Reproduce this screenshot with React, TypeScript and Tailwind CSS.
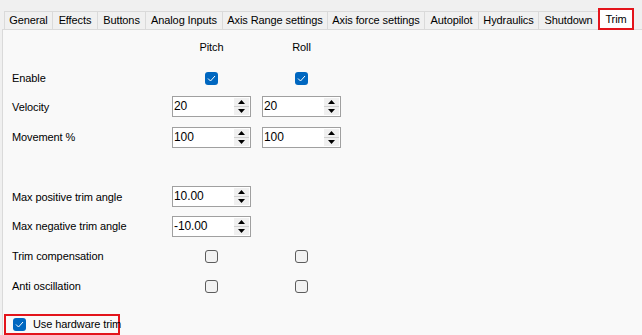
import { ReactNode } from "react";

const tabs = [
  { name: "General", w: 48 },
  { name: "Effects", w: 45 },
  { name: "Buttons", w: 48 },
  { name: "Analog Inputs", w: 77 },
  { name: "Axis Range settings", w: 105 },
  { name: "Axis force settings", w: 97 },
  { name: "Autopilot", w: 54 },
  { name: "Hydraulics", w: 60 },
  { name: "Shutdown", w: 60 },
];

function Check({ checked }: { checked?: boolean }) {
  if (checked) {
    return (
      <div className="w-[13px] h-[13px] shrink-0 rounded-[3px] bg-[#0067c0] flex items-center justify-center">
        <svg width="9" height="7" viewBox="0 0 9 7">
          <path d="M1 3.5 L3.5 6 L8 1" fill="none" stroke="#ffffff" strokeWidth="1" />
        </svg>
      </div>
    );
  }
  return <div className="w-[13px] h-[13px] shrink-0 rounded-[3px] border border-[#5c5c5c] bg-[#f2f2f2]" />;
}

function Spin({ value }: { value: string }) {
  return (
    <div className="w-[79px] h-[21px] border border-[#a0a0a0] bg-white flex">
      <div className="flex-1 pl-[1px] text-[12px] leading-[19px] text-black">{value}</div>
      <div className="w-[16px] flex flex-col py-[1px] pr-[1px]">
        <div className="flex-1 bg-[#f0f0f0] border-b border-[#d0d0d0] flex items-center justify-center">
          <svg width="7" height="4" viewBox="0 0 7 4">
            <path d="M0 4 L3.5 0 L7 4 Z" fill="#000" />
          </svg>
        </div>
        <div className="flex-1 bg-[#f0f0f0] flex items-center justify-center">
          <svg width="7" height="4" viewBox="0 0 7 4">
            <path d="M0 0 L3.5 4 L7 0 Z" fill="#000" />
          </svg>
        </div>
      </div>
    </div>
  );
}

function Row({ label, a, b, h = 30 }: { label: string; a?: ReactNode; b?: ReactNode; h?: number }) {
  return (
    <div className="flex items-center" style={{ height: h }}>
      <div className="w-[169px] pl-[9px] whitespace-nowrap">{label}</div>
      <div className="w-[79px] flex justify-center">{a}</div>
      <div className="w-[11px]" />
      <div className="w-[79px] flex justify-center">{b}</div>
    </div>
  );
}

export default function App() {
  return (
    <div
      className="w-[642px] h-[335px] bg-[#f0f0f0] overflow-hidden text-[11px] tracking-[-0.1px] text-black"
      style={{ fontFamily: '"Liberation Sans", Arial, sans-serif' }}
    >
      {/* Tab strip */}
      <div className="flex items-end h-[29px] pl-[4px]">
        {tabs.map((t) => (
          <div
            key={t.name}
            className="h-[18px] shrink-0 whitespace-nowrap border-t border-l border-[#dadada] bg-[#f0f0f0] flex items-center justify-center leading-none"
            style={{ width: t.w }}
          >
            {t.name}
          </div>
        ))}
        <div className="w-[36px] h-[22px] shrink-0 border-2 border-[#e3141b] bg-white flex items-center justify-center leading-none mb-[-1px] relative z-10">
          Trim
        </div>
      </div>

      {/* Panel */}
      <div className="ml-[2px] h-[306px] border-t border-l border-[#dadada] bg-[#f9f9f9] flex flex-col">
        <Row label="" h={35} a={<span>Pitch</span>} b={<span>Roll</span>} />
        <Row label="Enable" h={27} a={<Check checked />} b={<Check checked />} />
        <Row label="Velocity" h={31} a={<Spin value="20" />} b={<Spin value="20" />} />
        <Row label="Movement %" a={<Spin value="100" />} b={<Spin value="100" />} />
        <Row label="" />
        <Row label="Max positive trim angle" a={<Spin value="10.00" />} />
        <Row label="Max negative trim angle" a={<Spin value="-10.00" />} />
        <Row label="Trim compensation" a={<Check />} b={<Check />} />
        <Row label="Anti oscillation" a={<Check />} b={<Check />} />
        <div className="mt-[13px] ml-[1px] w-[116px] h-[21px] border-2 border-[#e3141b] flex items-center pl-[7px] gap-[7px] whitespace-nowrap">
          <Check checked />
          <span>Use hardware trim</span>
        </div>
      </div>
    </div>
  );
}
